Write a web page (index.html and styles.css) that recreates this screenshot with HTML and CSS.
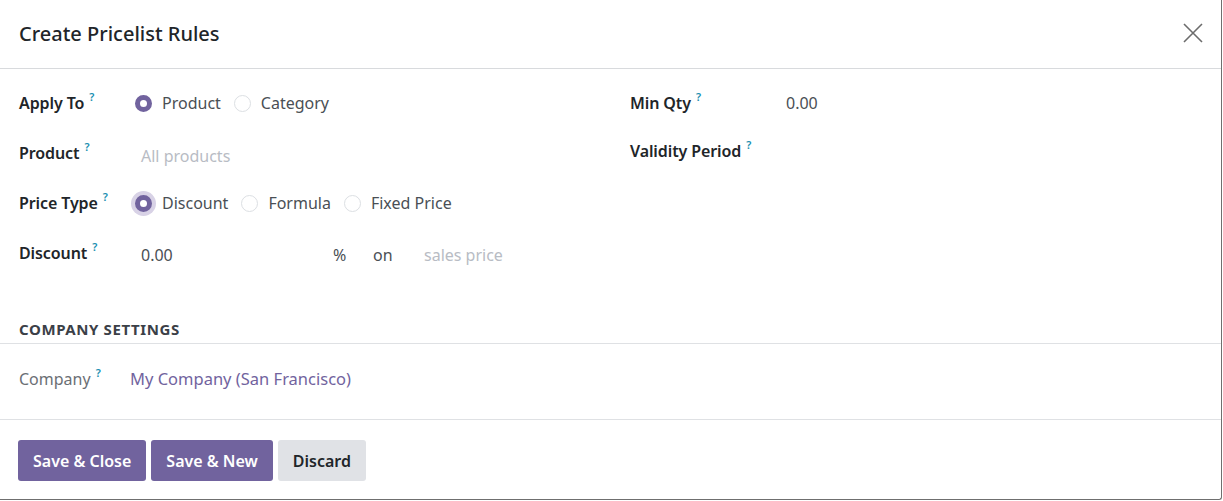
FILE: index.html
```html
<!DOCTYPE html>
<html lang="en">
<head>
<meta charset="utf-8">
<title>Create Pricelist Rules</title>
<link rel="stylesheet" href="styles.css">
</head>
<body>
<div class="modal">
  <header class="modal-header">
    <h4 class="modal-title">Create Pricelist Rules</h4>
    <button class="btn-close" aria-label="Close">
      <svg viewBox="0 0 20 20" width="20" height="20"><path d="M1 1 L19 19 M19 1 L1 19" stroke="#6c6c6c" stroke-width="1.6" fill="none"/></svg>
    </button>
  </header>
  <main class="modal-body">
    <div class="groups">
      <div class="group">
        <div class="row">
          <div class="label">Apply To<sup class="help">?</sup></div>
          <div class="value radios">
            <label class="radio"><span class="dot checked"></span>Product</label>
            <label class="radio"><span class="dot"></span>Category</label>
          </div>
        </div>
        <div class="row">
          <div class="label">Product<sup class="help">?</sup></div>
          <div class="value input placeholder low">All products</div>
        </div>
        <div class="row">
          <div class="label">Price Type<sup class="help">?</sup></div>
          <div class="value radios">
            <label class="radio"><span class="dot checked focus"></span>Discount</label>
            <label class="radio"><span class="dot"></span>Formula</label>
            <label class="radio"><span class="dot"></span>Fixed Price</label>
          </div>
        </div>
        <div class="row">
          <div class="label">Discount<sup class="help">?</sup></div>
          <div class="value discount">
            <span class="num">0.00</span>
            <span class="pct">%</span>
            <span class="on">on</span>
            <span class="placeholder">sales price</span>
          </div>
        </div>
      </div>
      <div class="group right">
        <div class="row">
          <div class="label">Min Qty<sup class="help">?</sup></div>
          <div class="value input">0.00</div>
        </div>
        <div class="row short">
          <div class="label">Validity Period<sup class="help">?</sup></div>
          <div class="value"></div>
        </div>
      </div>
    </div>
    <div class="separator">COMPANY SETTINGS</div>
    <div class="row company">
      <div class="label light">Company<sup class="help">?</sup></div>
      <div class="value link">My Company (San Francisco)</div>
    </div>
  </main>
  <footer class="modal-footer">
    <button class="btn primary">Save &amp; Close</button>
    <button class="btn primary">Save &amp; New</button>
    <button class="btn secondary">Discard</button>
  </footer>
</div>
</body>
</html>
```

FILE: styles.css
```css
* { box-sizing: border-box; }
html, body { margin: 0; padding: 0; background: #fff; }
body {
  font-family: "Noto Sans", "Open Sans", sans-serif;
  font-size: 16px;
  color: #374151;
  width: 1223px;
  height: 501px;
  overflow: hidden;
}
.modal {
  width: 1222px;
  height: 500px;
  border-right: 1px solid #6f6f6f;
  border-bottom: 1px solid #6f6f6f;
  border-bottom-right-radius: 3px;
  display: flex;
  flex-direction: column;
  background: #fff;
}
.modal-header {
  flex: none;
  height: 69px;
  border-bottom: 1px solid #d8dadd;
  display: flex;
  align-items: center;
  justify-content: space-between;
  padding: 0 19px 2px 19px;
}
.modal-title {
  margin: 0;
  font-size: 20px;
  font-weight: 500;
  color: #212529;
  letter-spacing: 0;
}
.btn-close {
  border: 0;
  background: transparent;
  padding: 0;
  margin-right: -1px;
  width: 20px;
  height: 20px;
  display: flex;
  align-items: center;
  justify-content: center;
}
.modal-body {
  padding: 9px 0 0 0;
  flex: 1;
  min-height: 0;
}
.groups {
  display: grid;
  grid-template-columns: 611px 1fr;
  padding: 0 19px;
}
.row {
  display: flex;
  align-items: center;
  height: 50px;
}
.row.short { height: 46px; }
.label {
  width: 116px;
  flex: none;
  font-weight: 600;
  color: #212529;
  font-size: 16px;
  letter-spacing: -0.1px;
}
.group.right .label { width: 150px; }
.label.light {
  font-weight: 400;
  color: #6b6f75;
  width: 111px;
  letter-spacing: 0;
}
.help {
  color: #1a8fb1;
  font-size: 11px;
  font-weight: 600;
  margin-left: 5px;
  vertical-align: 0;
  position: relative;
  top: -8px;
}
.value { color: #4a4f55; }
.input { padding-left: 6px; }
.low { padding-top: 6px; }
.placeholder { color: #b8bcc4; }
.radios { display: flex; align-items: center; gap: 13px; }
.radio {
  display: flex;
  align-items: center;
  gap: 10px;
  color: #4a4f55;
}
.dot {
  width: 17px;
  height: 17px;
  border-radius: 50%;
  border: 1px solid #dcdfe3;
  background: #fff;
  flex: none;
  box-sizing: border-box;
}
.dot.checked {
  border: 5px solid #71639e;
  background: #fff;
}
.dot.focus {
  box-shadow: 0 0 0 4px #d8d2e6;
}
.discount { display: flex; align-items: center; padding-top: 3px; }
.discount .num { width: 198px; padding-left: 6px; }
.discount .pct { width: 40px; }
.discount .on { width: 51px; }
.separator {
  margin-top: 43px;
  height: 23px;
  padding: 0 19px;
  font-size: 15px;
  font-weight: 700;
  color: #3b4047;
  border-bottom: 1px solid #dfe1e4;
  letter-spacing: 0.6px;
  line-height: 17px;
}
.row.company {
  padding: 0 19px;
  height: 75px;
  padding-bottom: 6px;
}
.link { color: #71639e; font-size: 16.5px; }
.modal-footer {
  flex: none;
  border-top: 1px solid #dfe1e4;
  display: flex;
  gap: 5px;
  padding: 20px 18px 0 18px;
  height: 80px;
}
.btn {
  height: 41px;
  border: 0;
  border-radius: 3px;
  font-family: inherit;
  font-size: 16px;
  font-weight: 600;
  padding: 0 15px;
}
.btn.primary { background: #71639e; color: #fff; }
.btn.secondary { background: #e0e2e6; color: #212529; }
```
